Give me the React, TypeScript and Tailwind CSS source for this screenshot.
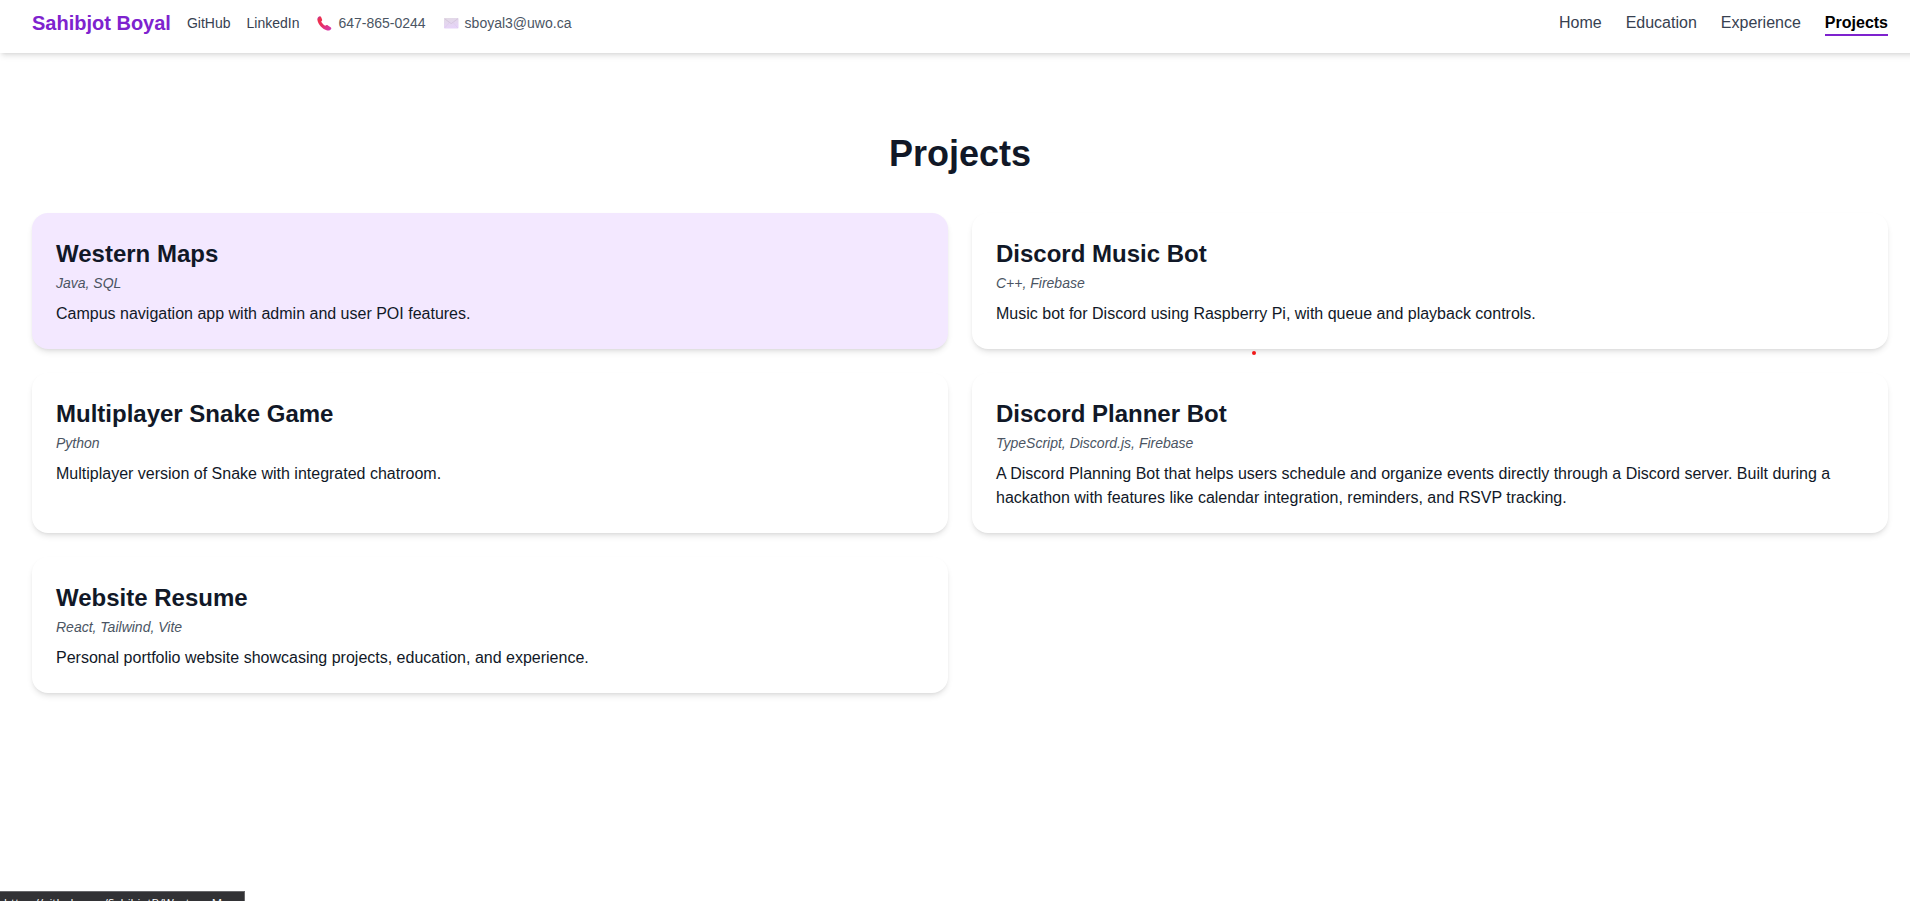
const projects = [
  { title: "Western Maps", tech: "Java, SQL", text: "Campus navigation app with admin and user POI features.", active: true },
  { title: "Discord Music Bot", tech: "C++, Firebase", text: "Music bot for Discord using Raspberry Pi, with queue and playback controls." },
  { title: "Multiplayer Snake Game", tech: "Python", text: "Multiplayer version of Snake with integrated chatroom." },
  {
    title: "Discord Planner Bot",
    tech: "TypeScript, Discord.js, Firebase",
    text: "A Discord Planning Bot that helps users schedule and organize events directly through a Discord server. Built during a hackathon with features like calendar integration, reminders, and RSVP tracking.",
  },
  { title: "Website Resume", tech: "React, Tailwind, Vite", text: "Personal portfolio website showcasing projects, education, and experience." },
];

function PhoneIcon() {
  return (
    <svg width="15" height="15" viewBox="0 0 15 15">
      <defs>
        <linearGradient id="phone" x1="0" y1="0" x2="1" y2="1">
          <stop offset="0" stopColor="#b03cb8" />
          <stop offset="0.18" stopColor="#f0304a" />
          <stop offset="0.5" stopColor="#e62f68" />
          <stop offset="1" stopColor="#d33bb8" />
        </linearGradient>
      </defs>
      <path
        fill="url(#phone)"
        d="M2.2 0.5 C3.2 0.1 3.8 0.5 4.2 1.3 L5.1 3.4 C5.3 4.1 5.1 4.6 4.7 5 L4.2 5.6 C4.9 7.2 6.4 8.9 8.2 9.8 L9.1 9.3 C9.7 9 10.3 9 10.9 9.4 L13.6 11.2 C14.4 11.8 14.5 12.4 14 13.2 C13.1 14.4 11.7 14.7 10.2 14.4 C5.4 13.3 1.3 8.9 0.4 4.1 C0.1 2.4 0.8 1.1 2.2 0.5 Z"
      />
    </svg>
  );
}

function MailIcon() {
  return (
    <svg width="15" height="11" viewBox="0 0 15 11">
      <defs>
        <linearGradient id="mail" x1="0" y1="0" x2="0.3" y2="1">
          <stop offset="0" stopColor="#e2dae4" />
          <stop offset="1" stopColor="#e6d3f8" />
        </linearGradient>
      </defs>
      <rect width="14.5" height="10.5" rx="0.8" fill="url(#mail)" />
      <path d="M0.6 0.7 L6.6 5.2 Q7.2 5.6 7.8 5.2 L13.9 0.7" fill="none" stroke="#cbbbd3" strokeWidth="0.6" />
      <path d="M0.6 10 L5.4 4.4 M13.9 10 L9 4.4" fill="none" stroke="#d9c5e8" strokeWidth="0.4" />
    </svg>
  );
}

export default function App() {
  return (
    <div className="relative h-[901px] w-full overflow-hidden bg-white font-['Liberation_Sans',Arial,sans-serif] text-[#111827]">
      <div className="w-[1920px]">
        <header className="flex h-[53px] items-start justify-between bg-white px-8 pt-[9px] shadow-md">
          <div className="flex items-center gap-4 text-sm text-[#374151]">
            <span className="text-xl leading-7 font-bold text-[#7e22ce]">Sahibjot Boyal</span>
            <a>GitHub</a>
            <a>LinkedIn</a>
            <span className="flex items-center gap-[6px] pl-[2px] text-[#4b5563]">
              <PhoneIcon />
              647-865-0244
            </span>
            <span className="flex items-center gap-[6px] pl-[2px] text-[#4b5563]">
              <MailIcon />
              sboyal3@uwo.ca
            </span>
          </div>
          <nav className="flex gap-6 pt-[2px] leading-6 text-[#374151]">
            <a>Home</a>
            <a>Education</a>
            <a>Experience</a>
            <a className="h-[25px] border-b-2 border-[#7e22ce] font-bold text-black">Projects</a>
          </nav>
        </header>
        <main className="px-8 pt-[81px]">
          <h2 className="mb-[39px] text-center text-4xl font-bold">Projects</h2>
          <div className="grid grid-cols-2 gap-6">
            {projects.map((p) => (
              <article key={p.title} className={`rounded-2xl px-6 pt-[25px] pb-[23px] shadow-md ${p.active ? "bg-[#f3e8ff]" : "bg-white"}`}>
                <h3 className="text-2xl font-bold">{p.title}</h3>
                <p className="mt-[3px] text-sm text-[#4b5563] italic">{p.tech}</p>
                <p className="mt-[9px]">{p.text}</p>
              </article>
            ))}
          </div>
        </main>
      </div>
      <span className="absolute top-[351px] left-[1252px] size-1 rounded-full bg-[#f01818]" />
      <div className="absolute top-[891px] left-0 h-[20px] w-[245px] overflow-hidden border-t border-r border-[#68686b] bg-[#323235] pt-[2px] pl-1 font-['Open_Sans',sans-serif] text-[11.5px] leading-[17px] whitespace-nowrap text-white">
        https://github.com/SahibjotB/Western-Maps
      </div>
    </div>
  );
}
